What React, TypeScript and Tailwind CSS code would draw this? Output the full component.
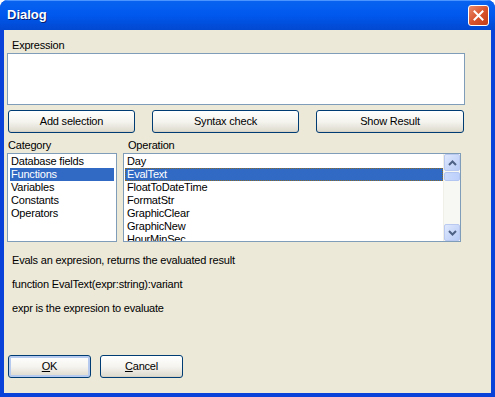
import React, { useState } from 'react';

const categories = ['Database fields', 'Functions', 'Variables', 'Constants', 'Operators'];
const operations = ['Day', 'EvalText', 'FloatToDateTime', 'FormatStr', 'GraphicClear', 'GraphicNew', 'HourMinSec'];

function XpButton({ children, className = '', focused = false }: { children: React.ReactNode, className?: string, focused?: boolean }) {
  return (
    <button
      className={`h-[23px] rounded-[3px] border border-[#003c74] bg-gradient-to-b from-white via-[#f5f4ef] to-[#dcd9cc] text-[11px] text-black ${focused ? 'shadow-[inset_0_0_0_2px_#b6c9ee]' : 'shadow-[inset_0_-1px_0_#d6d0c5]'} ${className}`}
    >
      {children}
    </button>
  );
}

export default function App() {
  const [cat, setCat] = useState(1);
  const [op, setOp] = useState(1);

  return (
    <div className="w-[495px] h-[397px] flex flex-col bg-[#0842d8] rounded-t-[8px] overflow-hidden font-['Liberation_Sans',Arial,sans-serif] text-[11px] tracking-[-0.2px] text-black select-none">
      {/* Title bar */}
      <div className="h-[30px] shrink-0 flex items-center justify-between pl-[7px] pr-[6px] bg-gradient-to-b from-[#0a64f0] via-[#0058ee] to-[#0248d0] shadow-[inset_0_1px_0_#4a95ff]">
        <span className="text-white font-bold text-[13px] [text-shadow:1px_1px_0_#0a1e6e] tracking-[0px]">Dialog</span>
        <div className="w-[21px] h-[21px] rounded-[3px] border border-white bg-gradient-to-br from-[#e8896a] via-[#d9542d] to-[#c23d14] flex items-center justify-center">
          <svg width="11" height="11" viewBox="0 0 11 11">
            <path d="M1.5 1.5 L9.5 9.5 M9.5 1.5 L1.5 9.5" stroke="white" strokeWidth="2" strokeLinecap="square" />
          </svg>
        </div>
      </div>

      {/* Client area */}
      <div className="flex-1 mx-[4px] mb-[4px] bg-[#ece9d8] flex flex-col pl-[3px]">
        <div className="h-[14px] mt-[8px] pl-[5px] leading-[14px]">Expression</div>
        <div className="w-[458px] h-[52px] mt-[1px] border border-[#7f9db9] bg-white" />

        <div className="flex mt-[5px] pl-[1px]">
          <XpButton className="w-[127px]">Add selection</XpButton>
          <XpButton className="w-[147px] ml-[17px]">Syntax check</XpButton>
          <XpButton className="w-[148px] ml-[17px]">Show Result</XpButton>
        </div>

        <div className="flex mt-[5px]">
          <div className="flex flex-col">
            <div className="h-[15px] leading-[15px] pl-[1px]">Category</div>
            <div className="w-[110px] h-[89px] border border-[#7f9db9] bg-white py-[1px] px-[2px] overflow-hidden">
              {categories.map((c, i) => (
                <div
                  key={c}
                  onClick={() => setCat(i)}
                  className={`h-[13px] leading-[13px] pl-[1px] ${i === cat ? 'bg-[#316ac5] text-white' : ''}`}
                >
                  {c}
                </div>
              ))}
            </div>
          </div>
          <div className="flex flex-col ml-[6px]">
            <div className="h-[15px] leading-[15px] pl-[5px]">Operation</div>
            <div className="w-[338px] h-[89px] border border-[#7f9db9] bg-white flex overflow-hidden">
              <div className="flex-1 py-[1px] pl-[1px] overflow-hidden">
                {operations.map((o, i) => (
                  <div
                    key={o}
                    onClick={() => setOp(i)}
                    className={`h-[13px] leading-[13px] pl-[2px] ${i === op ? 'bg-[#316ac5] text-white outline outline-1 outline-dotted outline-[#8a6c2a] -outline-offset-1' : ''}`}
                  >
                    {o}
                  </div>
                ))}
              </div>
              {/* Scrollbar */}
              <div className="w-[17px] bg-[#f7f7f4] flex flex-col justify-between border-l border-[#f0efe8]">
                <div className="flex flex-col">
                  <div className="h-[17px] rounded-[2px] bg-gradient-to-br from-[#dfe8fd] to-[#b7cbf6] border border-[#b9c9ef] flex items-center justify-center">
                    <svg width="9" height="6" viewBox="0 0 9 6">
                      <path d="M1 5 L4.5 1.5 L8 5" stroke="#4d6185" strokeWidth="2" fill="none" />
                    </svg>
                  </div>
                  <div className="h-[9px] mt-[1px] rounded-[2px] bg-gradient-to-r from-[#cbdafc] to-[#bcd0fb] border border-[#b3c6f2]" />
                </div>
                <div className="h-[17px] rounded-[2px] bg-gradient-to-br from-[#dfe8fd] to-[#b7cbf6] border border-[#b9c9ef] flex items-center justify-center">
                  <svg width="9" height="6" viewBox="0 0 9 6">
                    <path d="M1 1 L4.5 4.5 L8 1" stroke="#4d6185" strokeWidth="2" fill="none" />
                  </svg>
                </div>
              </div>
            </div>
          </div>
        </div>

        <div className="pl-[5px] mt-[11px] leading-[14px]">Evals an expresion, returns the evaluated result</div>
        <div className="pl-[5px] mt-[10px] leading-[14px]">function EvalText(expr:string):variant</div>
        <div className="pl-[5px] mt-[10px] leading-[14px]">expr is the expresion to evaluate</div>

        <div className="flex mt-[40px] pl-[1px]">
          <XpButton className="w-[83px]" focused>
            <span className="underline">O</span>K
          </XpButton>
          <XpButton className="w-[83px] ml-[9px]">
            <span className="underline">C</span>ancel
          </XpButton>
        </div>
      </div>
    </div>
  );
}
